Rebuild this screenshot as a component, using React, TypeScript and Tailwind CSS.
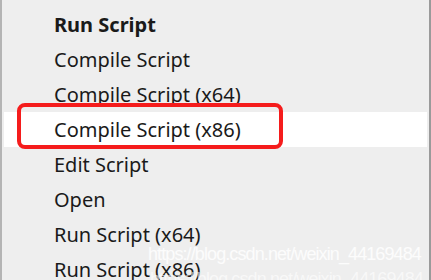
const items = [
  { label: "Run Script", bold: true },
  { label: "Compile Script" },
  { label: "Compile Script (x64)" },
  { label: "Compile Script (x86)", active: true },
  { label: "Edit Script" },
  { label: "Open" },
  { label: "Run Script (x64)" },
  { label: "Run Script (x86)" },
];

export default function App() {
  return (
    <div className="relative flex h-[280px] w-[431px] overflow-hidden bg-[#eeeeee] font-['Noto_Sans',sans-serif] text-[#1a1a1a]">
      {/* left frame edge */}
      <div className="w-[2px] shrink-0 bg-[#b4b4b4]" />

      {/* menu */}
      <ul className="flex w-[427px] flex-col pl-[2px] pr-[2px] pt-[7px]">
        {items.map((item) => (
          <li
            key={item.label}
            className={`relative flex h-[35px] shrink-0 items-center pl-[50px] text-[20px] leading-none ${
              item.bold ? "font-bold" : ""
            } ${item.active ? "bg-white" : ""}`}
          >
            {item.label}
            {item.active && (
              <span className="pointer-events-none absolute left-[13px] top-[-9px] h-[46px] w-[266px] rounded-[8px] border-[4px] border-[#f51c1c]" />
            )}
          </li>
        ))}
      </ul>

      {/* right frame edge */}
      <div className="ml-auto w-[2px] shrink-0 bg-[#9a9a9a]" />

      {/* watermark */}
      <div className="pointer-events-none absolute left-[148px] top-[245px] font-['Liberation_Sans',sans-serif] text-[18px] leading-none tracking-[-0.05em] text-white/80">
        https://blog.csdn.net/weixin_44169484
      </div>
      <div className="pointer-events-none absolute left-[150px] top-[270px] font-['Liberation_Sans',sans-serif] text-[18px] leading-none tracking-[-0.05em] text-white/60">
        https://blog.csdn.net/weixin_44169484
      </div>
    </div>
  );
}
